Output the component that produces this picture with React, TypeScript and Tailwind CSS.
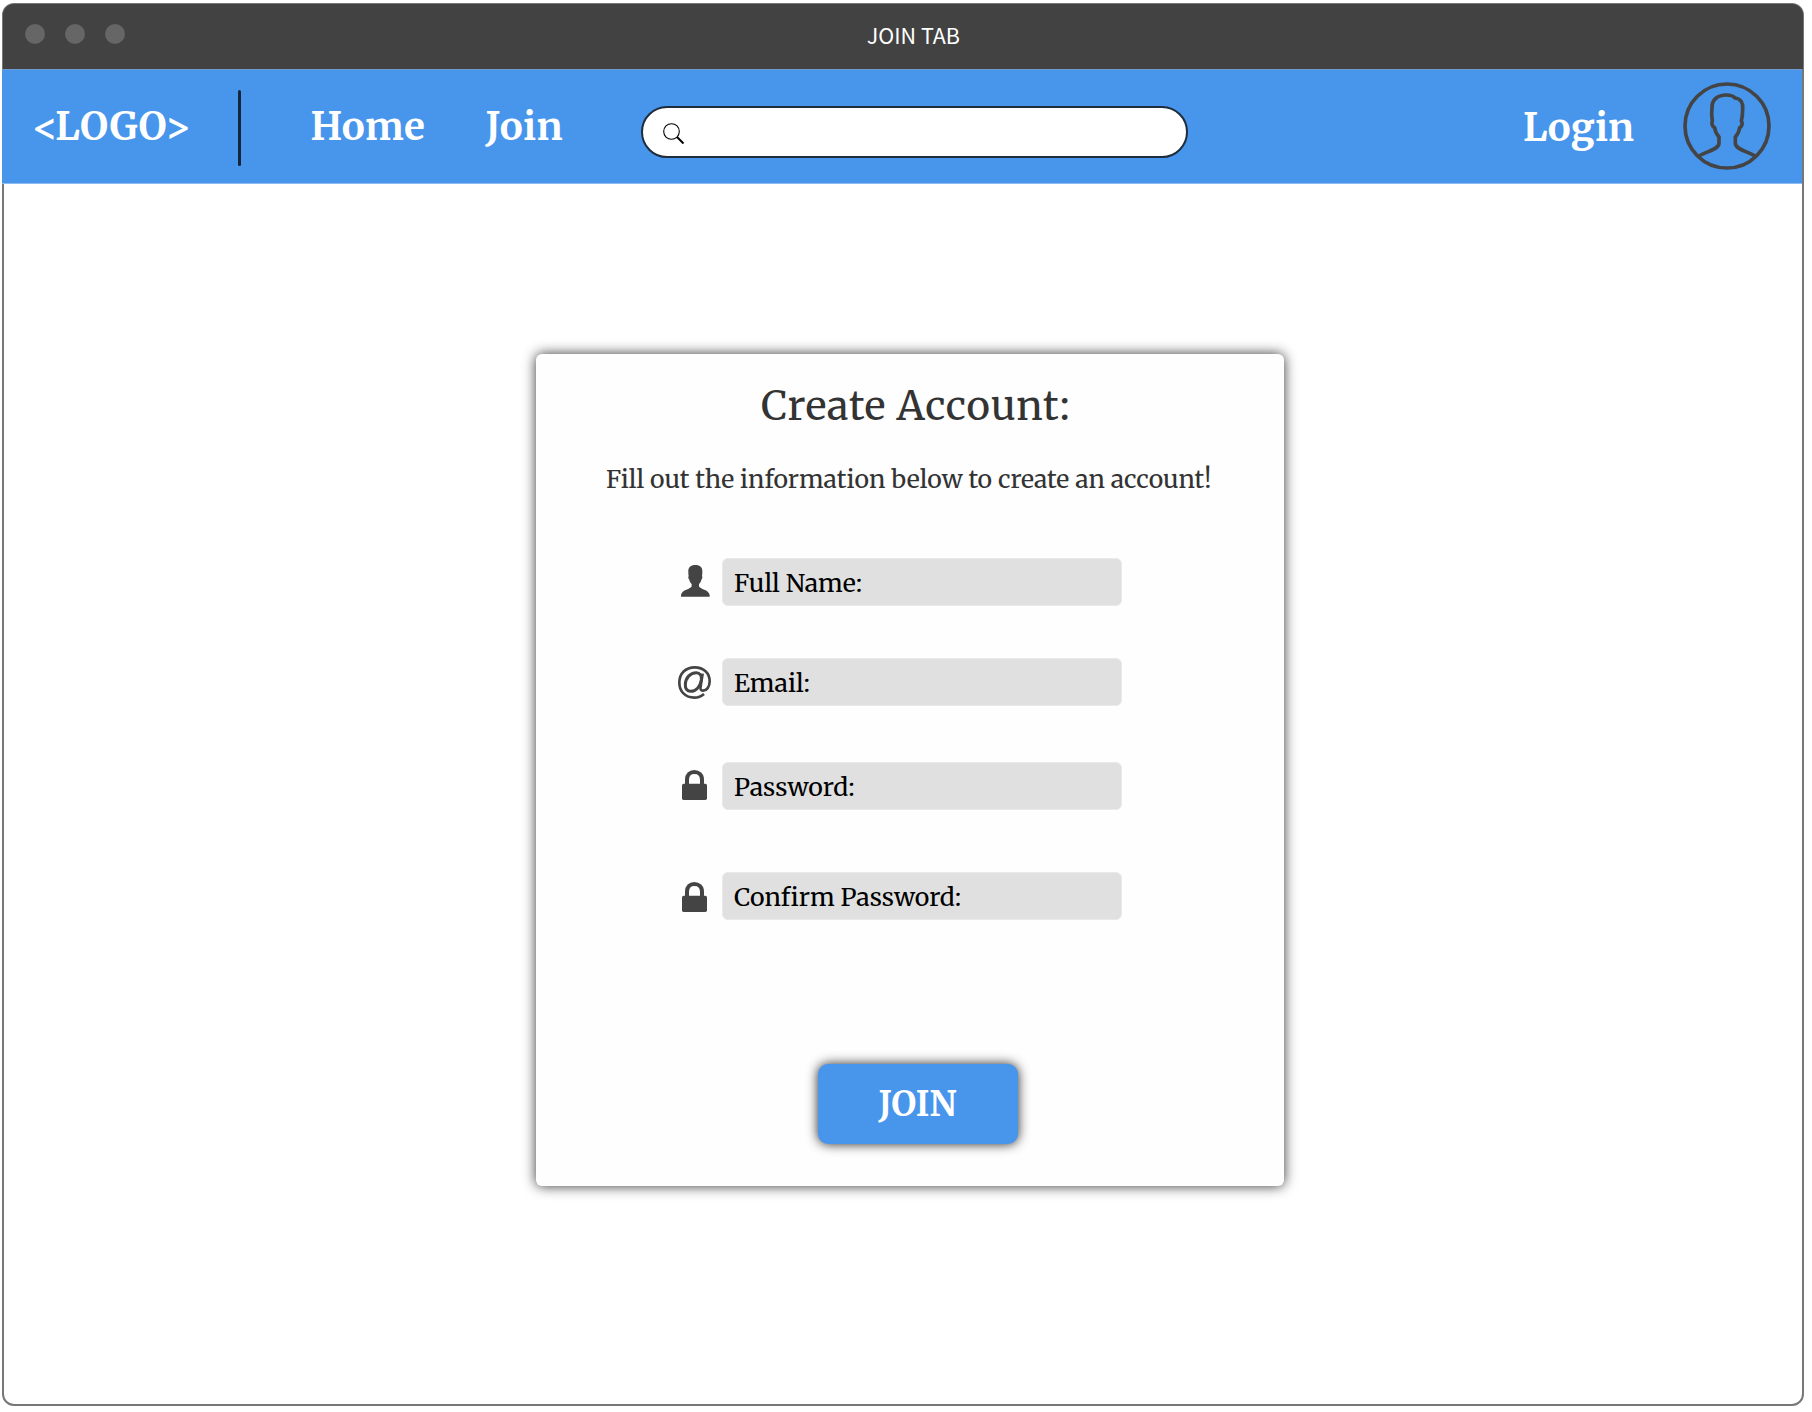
import type { ReactNode } from "react";

function SearchIcon() {
  return (
    <svg viewBox="0 0 22 22" className="mt-[3px] h-[22px] w-[22px]" fill="none" stroke="#000">
      <circle cx="8.5" cy="8.5" r="7.8" strokeWidth="1.1" />
      <path d="M14 14 L20.5 20.5" strokeWidth="2" />
    </svg>
  );
}

function AvatarIcon() {
  return (
    <svg viewBox="38 34 264 264" className="h-[88px] w-[88px]" fill="none" stroke="#444" strokeWidth="11" strokeLinejoin="round">
      <circle cx="170" cy="166" r="126" />
      <path d="M85 257 C101 244 146 238 146 218 V199 C139 191 134 182 133 171 C126 168 123 158 126 151 C124 138 123 126 125 112 C124 86 143 73 168 73 C181 73 189 76 194 82 C212 84 219 98 217 116 C217 130 216 140 213 151 C218 158 215 168 208 171 C207 182 202 191 195 199 V218 C195 238 240 244 255 257" />
    </svg>
  );
}

function UserIcon() {
  return (
    <svg viewBox="0 0 87 96" className="-mt-[2px] ml-[2px] h-8 w-[29px]" fill="#444">
      <path d="M43 0 C57 0 65 7 64 20 C64 25 64 29 63 33 C65 35 64 42 61 44 C60 50 57 54 54 57 V64 C56 73 84 74 86 90 V95 H0 V90 C2 74 30 73 32 64 V57 C29 54 26 50 25 44 C22 42 21 35 23 33 C22 29 22 25 22 20 C21 8 29 0 43 0Z" />
    </svg>
  );
}

function AtIcon() {
  return (
    <svg viewBox="0 0 99 99" className="h-[33px] w-[33px]" fill="none" stroke="#444" strokeWidth="8">
      <path d="M78 84 C70 91 60 95 49 95 C22 95 4 76 4 50 C4 22 23 4 50 4 C77 4 95 21 95 46 C95 63 86 74 75 74 C68 74 66 69 68 61 L74 23" />
      <path d="M70 42 C72 28 65 20 55 20 C36 20 23 36 22 55 C21 68 28 76 38 76 C54 76 66 62 70 42Z" strokeWidth="9" />
    </svg>
  );
}

function LockIcon({ className }: { className: string }) {
  return (
    <svg viewBox="0 0 75 90" className={`h-[30px] w-[25px] ${className}`} fill="#444">
      <rect x="0" y="41" width="75" height="49" rx="5" />
      <path d="M15 44 V29 C15 14 24 6 37 6 C50 6 60 14 60 29 V44" fill="none" stroke="#444" strokeWidth="12" />
    </svg>
  );
}

function Field({ icon, label, className }: { icon: ReactNode; label: string; className: string }) {
  return (
    <div className={`flex h-12 items-center ${className}`}>
      <div className="flex w-[33px] shrink-0 justify-center">{icon}</div>
      <div className="ml-[11px] flex h-12 w-[400px] items-center rounded-[6px] border border-[#e9e9e9] bg-[#e0e0e0] pt-0.5 pl-[11px] text-[24.9px] leading-[34px] text-black">
        {label}
      </div>
    </div>
  );
}

export default function App() {
  return (
    <div className="h-[1412px] w-[1812px] overflow-hidden bg-white pt-[3px] pl-[2px] font-['Merriweather','Noto_Serif',serif]">
      <div className="flex h-[1403px] w-[1802px] flex-col rounded-[12px] border-2 border-[#777] bg-white">
        <header className="-mx-px -mt-px flex h-[65px] shrink-0 items-center rounded-t-[11px] bg-[#424242]">
          <div className="flex flex-1 gap-5 pb-[5px] pl-[22px]">
            <span className="size-5 rounded-full bg-[#666]" />
            <span className="size-5 rounded-full bg-[#666]" />
            <span className="size-5 rounded-full bg-[#666]" />
          </div>
          <h1 className="mb-[3px] ml-[-1px] font-['Noto_Sans_CJK_SC',sans-serif] text-[21.5px] leading-[30px] text-white">JOIN TAB</h1>
          <div className="w-[843px]" />
        </header>

        <nav className="-ml-[2px] flex h-[115px] shrink-0 items-center border-y border-t-[#6f9bd0] border-b-[#8dbcf2] bg-[#4895ec] text-[38.5px] leading-[50px] font-bold text-white">
          <span className="mt-px ml-[30px] w-[206px]">&lt;LOGO&gt;</span>
          <span className="mt-[2px] h-[76px] w-[2.5px] rounded-full bg-[#16253a]" />
          <a className="mt-px ml-[70px] w-[175px] tracking-[0.3px]">Home</a>
          <a className="mt-px w-[155.5px] tracking-[0.3px]">Join</a>
          <div className="mt-[11px] flex h-[52px] w-[547px] items-center rounded-full border-[2.5px] border-[#1e2c3c] bg-white pl-5">
            <SearchIcon />
          </div>
          <a className="ml-auto text-[38.3px]">Login</a>
          <span className="mr-[31px] ml-[49px] -mt-[2px]">
            <AvatarIcon />
          </span>
        </nav>

        <main className="flex flex-1 flex-col items-start">
          <section className="mt-[170px] ml-[532px] flex h-[832px] w-[748px] flex-col items-start rounded-[6px] bg-[#fefefe] shadow-[0_0_13px_rgba(0,0,0,0.8)]">
            <h2 className="mt-[27px] ml-[225px] text-[40px] leading-[51px] tracking-[0.8px] text-[#333] [font-variation-settings:'opsz'_18]">
              Create Account:
            </h2>
            <p className="mt-[31px] ml-[70px] text-[24.8px] leading-[34px] whitespace-nowrap text-[#333]">
              Fill out the information below to create an account!
            </p>
            <form className="ml-[142px]">
              <Field icon={<UserIcon />} label="Full Name:" className="mt-[61px]" />
              <Field icon={<AtIcon />} label="Email:" className="mt-[52px]" />
              <Field icon={<LockIcon className="-mt-[2px]" />} label="Password:" className="mt-14" />
              <Field icon={<LockIcon className="mt-[2px]" />} label="Confirm Password:" className="mt-[62px]" />
            </form>
            <button className="mt-36 ml-[282px] flex h-20 w-[200px] items-center justify-center rounded-[10px] bg-[#4895ec] pr-px text-[34.3px] leading-[44px] font-bold text-white shadow-[0_0_12px_rgba(0,0,0,0.85)]">
              JOIN
            </button>
          </section>
        </main>
      </div>
    </div>
  );
}
